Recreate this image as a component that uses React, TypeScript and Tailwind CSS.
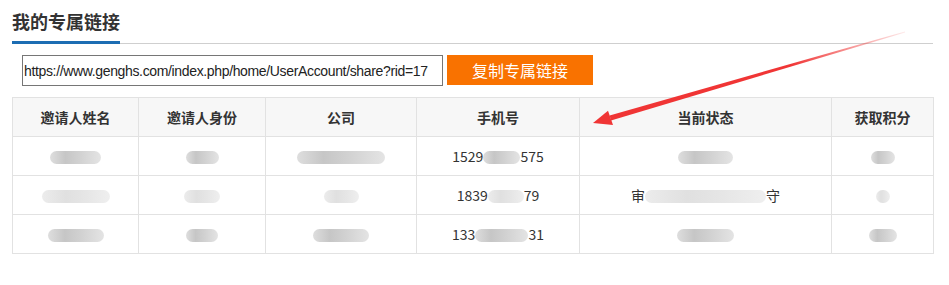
import React from 'react';

const cols = [126, 127, 151, 163, 252, 102];
const headers = ['邀请人姓名', '邀请人身份', '公司', '手机号', '当前状态', '获取积分'];

// mosaic-style blurred patch standing in for hidden data
const Blur = ({ w, light }: { w: number; light?: boolean }) => (
  <span
    className={
      light
        ? 'inline-block h-[13px] align-middle rounded-full blur-[0.6px] bg-[linear-gradient(90deg,#ececec,#e0e0e0_35%,#e6e6e6_65%,#efefef)]'
        : 'inline-block h-[13px] align-middle rounded-full blur-[0.6px] bg-[linear-gradient(90deg,#dedede,#c6c6c6_30%,#d2d2d2_60%,#e4e4e4)]'
    }
    style={{ width: w }}
  />
);

const rows: React.ReactNode[][] = [
  [
    <Blur w={51} />,
    <Blur w={33} />,
    <Blur w={88} />,
    <>1529<Blur w={37} />575</>,
    <Blur w={55} />,
    <Blur w={24} />,
  ],
  [
    <Blur w={68} light />,
    <Blur w={36} light />,
    <Blur w={35} light />,
    <>1839<Blur w={36} light />79</>,
    <>审<Blur w={121} light />守</>,
    <Blur w={14} light />,
  ],
  [
    <Blur w={56} />,
    <Blur w={32} />,
    <Blur w={56} />,
    <>133<Blur w={53} />31</>,
    <Blur w={57} />,
    <Blur w={28} />,
  ],
];

export default function App() {
  return (
    <div className="relative w-[949px] h-[285px] bg-white text-[#333] font-['Noto_Sans_CJK_SC','Noto_Sans',sans-serif] overflow-hidden">
      <div className="pl-3 pt-[9px]">
        {/* title */}
        <div className="w-[921px] border-b border-[#cfcfcf]">
          <h2 className="inline-block w-[108px] text-[18px] leading-[24px] font-bold pb-[8px] border-b-[3px] border-[#1c6db3] -mb-px">
            我的专属链接
          </h2>
        </div>

        {/* link + copy */}
        <div className="flex items-start gap-1 mt-[11px] ml-[10px]">
          <input
            readOnly
            value="https://www.genghs.com/index.php/home/UserAccount/share?rid=17"
            className="w-[421px] h-[31px] border border-[#767676] px-px text-[14px] tracking-[-0.35px] text-[#222] font-['Liberation_Sans',sans-serif] outline-none"
          />
          <button className="w-[146px] h-[30px] bg-[#f97200] text-white text-[16px]">
            复制专属链接
          </button>
        </div>

        {/* invite table */}
        <table className="mt-[11px] border-collapse text-[14px] table-fixed">
          <colgroup>
            {cols.map((w, i) => (
              <col key={i} style={{ width: w }} />
            ))}
          </colgroup>
          <thead>
            <tr className="bg-[#f7f7f7] h-[39px]">
              {headers.map((h) => (
                <th key={h} className="border border-[#e2e2e2] font-bold text-center">
                  {h}
                </th>
              ))}
            </tr>
          </thead>
          <tbody>
            {rows.map((r, i) => (
              <tr key={i} className="h-[39px]">
                {r.map((c, j) => (
                  <td key={j} className="border border-[#e2e2e2] text-center whitespace-nowrap">
                    {c}
                  </td>
                ))}
              </tr>
            ))}
          </tbody>
        </table>
      </div>

      {/* red arrow drawn over the page */}
      <svg className="absolute left-0 top-0 pointer-events-none" width="949" height="285">
        <defs>
          <linearGradient id="fade" gradientUnits="userSpaceOnUse" x1="905" y1="32" x2="790" y2="65">
            <stop offset="0" stopColor="#f03535" stopOpacity="0.1" />
            <stop offset="1" stopColor="#f03535" stopOpacity="1" />
          </linearGradient>
        </defs>
        <polygon points="611,120.6 609.6,115.4 904.9,31.5 905.1,32.5" fill="url(#fade)" />
        <polygon points="593,123 608,110.8 613,125" fill="#f03535" />
      </svg>
    </div>
  );
}
